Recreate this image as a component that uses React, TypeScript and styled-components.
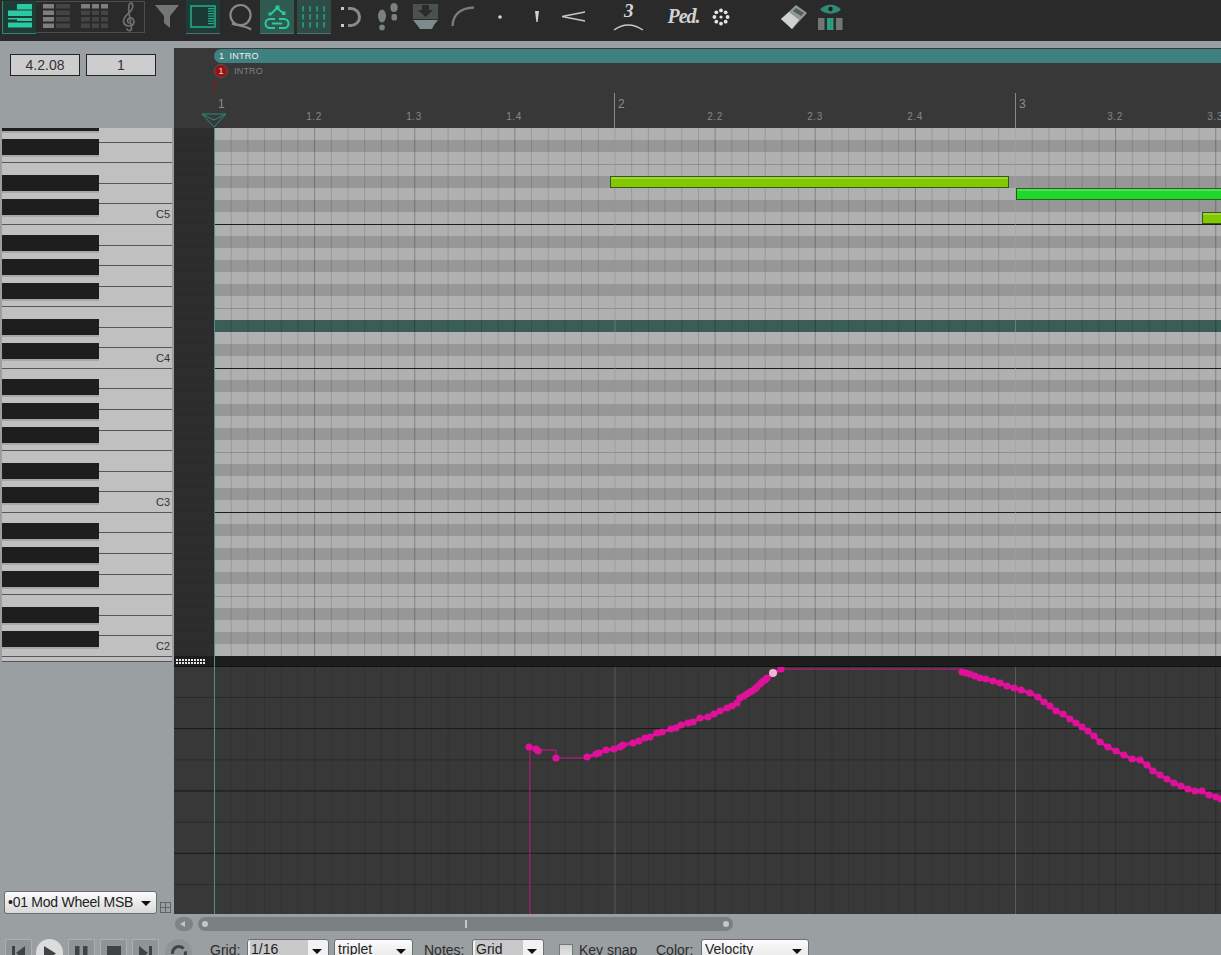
import React from "react";
import styled, { createGlobalStyle } from "styled-components";

const Global = createGlobalStyle`
  html, body { margin: 0; padding: 0; background: #9a9fa2; }
  body { font-family: "Liberation Sans", Arial, sans-serif; overflow: hidden; }
`;

const Page = styled.div`
  width: 1221px; height: 955px; overflow: hidden; background: #9a9fa2;
  display: flex; flex-direction: column;
`;

/* ---------- toolbar ---------- */
const Toolbar = styled.div`
  height: 41px; flex: none; background: #2a2a2a; display: flex; align-items: flex-start;
`;
const ModeGroup = styled.div`
  margin: 1px 0 0 2px; width: 143px; height: 32px; border: 1px solid #4a4d4c; box-sizing: border-box;
  display: flex; align-items: flex-start; position: relative;
`;
const ModeActive = styled.div`
  width: 34px; height: 33px; margin: -1px 0 0 -1px; background: #1f3b36; border-bottom: 1px solid #2b8a76;
  border-left: 1px solid #2b8a76; box-sizing: border-box;
  display: flex; align-items: center; justify-content: center;
`;
const ModeSlot = styled.div<{ $l: number; $w: number }>`
  margin-left: ${(p) => p.$l}px; width: ${(p) => p.$w}px; height: 30px;
  display: flex; align-items: center; justify-content: center;
`;
const Tool = styled.div<{ $l: number; $w: number; $on?: string }>`
  margin-left: ${(p) => p.$l}px; width: ${(p) => p.$w}px; height: 34px; flex: none; box-sizing: border-box;
  display: flex; align-items: center; justify-content: center; position: relative;
  background: ${(p) => p.$on || "transparent"};
  border-bottom: 1px solid ${(p) => (p.$on ? "#4f6f68" : "transparent")};
`;
const ThreeMark = styled.span`
  position: absolute; top: 0; left: 11px; font: italic bold 19px "Liberation Serif", serif; color: #d6d6d6;
`;
const SlurBox = styled.div`
  margin-top: 20px; display: flex;
`;
const PedMark = styled.span`
  font: italic bold 20px "Liberation Serif", serif; color: #d2d2d2; letter-spacing: -1px; white-space: nowrap;
`;

/* ---------- main ---------- */
const Main = styled.div`
  display: flex; height: 873px; flex: none;
`;
const LeftCol = styled.div`
  width: 174px; flex: none; display: flex; flex-direction: column;
`;
const Counters = styled.div`
  display: flex; gap: 6px; margin: 13px 0 0 10px;
`;
const Counter = styled.div`
  width: 70px; height: 22px; box-sizing: border-box; border: 1px solid #222; background: #cdcdcd;
  color: #333; font-size: 14px; line-height: 20px; text-align: center;
`;
const Keyboard = styled.div`
  margin: 52px 0 0 2px; width: 170px; height: 534px; background: #c0c0c0; position: relative; overflow: hidden;
  display: flex; flex-direction: column;
`;
const WhiteKey = styled.div<{ $h: number; $full: boolean }>`
  height: ${(p) => p.$h}px; flex: none; position: relative;
  &::after {
    content: ""; position: absolute; right: 0; bottom: -1px; height: 1px; background: #565656;
    left: ${(p) => (p.$full ? 0 : 97)}px;
  }
`;
const KeyLabel = styled.span`
  position: absolute; right: 2px; bottom: 4px; font-size: 11px; line-height: 12px; color: #333;
`;
const BlackKey = styled.div<{ $top: number }>`
  position: absolute; left: 0; top: ${(p) => p.$top}px; width: 97px; height: 16px; background: #1e1e1e;
  box-shadow: 0 2px 0 #a7a7a7;
`;
const LaneControls = styled.div`
  margin-top: auto; display: flex; align-items: flex-end; padding-left: 4px; margin-bottom: 0;
`;
const LaneSelect = styled.div`
  width: 153px; height: 23px; box-sizing: border-box; border: 1px solid #6a6e70; border-radius: 3px;
  background: linear-gradient(#fbfbfb, #d9d9d9); color: #222; font-size: 14px; line-height: 21px; padding-left: 3px;
  letter-spacing: -0.25px; position: relative; white-space: nowrap;
`;
const Arrow = styled.i<{ $r: number }>`
  position: absolute; right: ${(p) => p.$r}px; top: 9px; width: 0; height: 0;
  border-left: 5px solid transparent; border-right: 5px solid transparent; border-top: 5px solid #111;
`;
const PlusBox = styled.div`
  width: 11px; height: 11px; margin: 0 0 1px 3px; border: 1px solid #5f6466; box-sizing: border-box;
  background:
    linear-gradient(#5f6466, #5f6466) center / 100% 1px no-repeat,
    linear-gradient(#5f6466, #5f6466) center / 1px 100% no-repeat;
`;

const RightCol = styled.div`
  flex: 1; min-width: 0; margin-top: 7px; position: relative; display: flex; flex-direction: column;
`;
const Ruler = styled.div`
  height: 80px; flex: none; background: #383838; position: relative; overflow: hidden;
`;
const RegionBar = styled.div`
  position: absolute; left: 40px; right: 0; top: 1px; height: 14px; background: #3f8080;
  border-radius: 7px 0 0 7px; color: #f0f0f0; font-size: 9px; line-height: 15px; padding-left: 5px; letter-spacing: .2px;
  white-space: pre;
`;
const MarkerBadge = styled.div`
  position: absolute; left: 40px; top: 16px; width: 14px; height: 14px; border-radius: 50%; background: #9c1010;
  border: 1px solid #555; box-sizing: border-box; color: #ddd; font-size: 9px; line-height: 12px; text-align: center;
`;
const MarkerName = styled.span`
  position: absolute; left: 60px; top: 16px; color: #808080; font-size: 9px; line-height: 14px; letter-spacing: .2px;
`;
const RedTick = styled.div`
  position: absolute; left: 40px; top: 30px; width: 1px; height: 15px; background: #8c1616;
`;
const BarTick = styled.div<{ $x: number }>`
  position: absolute; left: ${(p) => p.$x}px; top: 45px; bottom: 0; width: 1px; background: #8a8a8a;
`;
const BarNumber = styled.span<{ $x: number }>`
  position: absolute; left: ${(p) => p.$x}px; top: 49px; font-size: 12px; line-height: 14px; color: #8c8c8c;
`;
const BeatNumber = styled.span<{ $x: number }>`
  position: absolute; left: ${(p) => p.$x - 15}px; width: 30px; text-align: center; top: 63px;
  font-size: 10px; line-height: 12px; color: #868686; letter-spacing: .5px;
`;
const PlayHead = styled.svg`
  position: absolute; left: 27px; top: 65px;
`;

const Roll = styled.div`
  height: 528px; flex: none; display: flex;
`;
const Gutter = styled.div`
  width: 40px; flex: none; background: #2d2d2d;
  background-image: repeating-linear-gradient(#2d2d2d 0 11px, #2a2a2a 11px 12px);
`;
const NoteGrid = styled.div`
  flex: 1; position: relative; overflow: hidden; display: flex; flex-direction: column;
`;
const Lane = styled.div<{ $kind: "light" | "dark" | "mark"; $line?: string }>`
  height: 12px; flex: none; box-sizing: border-box;
  background: ${(p) => (p.$kind === "light" ? "#b0b0b0" : p.$kind === "dark" ? "#979797" : "#3a5d56")};
  border-top: 1px solid ${(p) => p.$line || "transparent"};
`;
const GridLines = styled.div`
  position: absolute; inset: 0;
  background-image:
    linear-gradient(90deg, rgba(255,255,255,.3) 1px, transparent 1px),
    linear-gradient(90deg, rgba(0,0,0,.14) 1px, transparent 1px),
    linear-gradient(90deg, rgba(0,0,0,.14) 1px, transparent 1px);
  background-size: 400.5px 100%, 100.125px 100%, 16.6875px 100%;
`;
const Note = styled.div<{ $x: number; $y: number; $w: number; $c: string }>`
  position: absolute; left: ${(p) => p.$x}px; top: ${(p) => p.$y}px; width: ${(p) => p.$w}px; height: 12px;
  box-sizing: border-box; background: ${(p) => p.$c}; border: 1px solid #2f5a1a;
  box-shadow: inset 0 2px 0 rgba(255,255,255,.22);
`;
const Splitter = styled.div`
  height: 11px; flex: none; background: #1d1d1d; position: relative; border-bottom: 1px solid #111; box-sizing: border-box;
`;
const Grip = styled.div`
  position: absolute; left: 2px; top: 3px; width: 30px; height: 5px;
  background: repeating-linear-gradient(90deg, #e8e8e8 0 2px, transparent 2px 3px);
  mask-image: repeating-linear-gradient(#000 0 2px, transparent 2px 3px);
`;
const CCLane = styled.div`
  flex: 1; position: relative; overflow: hidden; background-color: #383838;
  background-image:
    linear-gradient(rgba(0,0,0,.42) 1px, transparent 1px),
    linear-gradient(rgba(0,0,0,.25) 1px, transparent 1px);
  background-size: 100% 62.4px, 100% 31.2px;
  background-position: 0 61px, 0 30px;
`;
const CCLines = styled.div`
  position: absolute; left: 40px; right: 0; top: 0; bottom: 0;
  background-image:
    linear-gradient(90deg, rgba(255,255,255,.22) 1px, transparent 1px),
    linear-gradient(90deg, rgba(0,0,0,.1) 1px, transparent 1px),
    linear-gradient(90deg, rgba(0,0,0,.12) 1px, transparent 1px);
  background-size: 400.5px 100%, 100.125px 100%, 16.6875px 100%;
`;
const CurveSvg = styled.svg`
  position: absolute; left: 0; top: 0;
`;
const Cursor = styled.div`
  position: absolute; left: 40px; top: 80px; bottom: 0; width: 1px; background: #459683;
`;

/* ---------- scrollbar ---------- */
const ScrollRow = styled.div`
  height: 24px; box-sizing: border-box; flex: none; display: flex; align-items: flex-start; padding: 3px 0 0 175px; gap: 5px;
`;
const ScrollArrow = styled.div`
  width: 18px; height: 14px; border-radius: 7px; background: #7e8385; position: relative;
  &::after {
    content: ""; position: absolute; left: 5px; top: 4px; width: 0; height: 0;
    border-top: 3px solid transparent; border-bottom: 3px solid transparent; border-right: 5px solid #c0c4c5;
  }
`;
const ScrollTrack = styled.div`
  width: 535px; height: 14px; border-radius: 7px; background: #7a7f80; position: relative;
`;
const ScrollDot = styled.i<{ $x: number }>`
  position: absolute; left: ${(p) => p.$x}px; top: 4px; width: 6px; height: 6px; border-radius: 50%; background: #c4c7c8;
`;
const ScrollMid = styled.i`
  position: absolute; left: 267px; top: 3px; width: 2px; height: 8px; background: #c4c7c8;
`;

/* ---------- bottom controls ---------- */
const Controls = styled.div`
  height: 17px; overflow: hidden; flex: none; display: flex; align-items: flex-start; padding-top: 1px; color: #2a2a2a; font-size: 14px;
`;
const Transport = styled.div<{ $round?: boolean; $l: number; $light?: boolean }>`
  margin-left: ${(p) => p.$l}px; width: 27px; height: 28px; box-sizing: border-box; flex: none;
  border: 1px solid ${(p) => (p.$round ? "transparent" : "#abb0b2")};
  border-radius: ${(p) => (p.$round ? "50%" : "1px")};
  background: ${(p) => (p.$light ? "#dcdcdc" : "#8f9496")};
  display: flex; align-items: center; justify-content: center;
`;
const Label = styled.span<{ $l: number; $w: number }>`
  margin-left: ${(p) => p.$l}px; width: ${(p) => p.$w}px; line-height: 18px; padding-top: 2px; white-space: nowrap; flex: none; color: #2c2c2c;
`;
const DropDown = styled.div<{ $w: number; $l: number; $flat?: boolean }>`
  margin-left: ${(p) => p.$l}px; width: ${(p) => p.$w}px; height: 30px; box-sizing: border-box; flex: none; position: relative;
  border: 1px solid #6c7072; border-radius: 3px; padding-left: 2px; line-height: 19px;
  background: ${(p) => (p.$flat ? "#f2f2f2" : "linear-gradient(#fbfbfb, #dedede)")}; color: #222;
`;
const DropText = styled.span<{ $w?: number }>`
  display: inline-block; padding-left: 1px; height: 20px; width: ${(p) => (p.$w ? `${p.$w}px` : "auto")};
  background: ${(p) => (p.$w ? "#c9c9c9" : "transparent")};
`;
const DropArrow = styled.i`
  position: absolute; right: 6px; top: 9px; width: 0; height: 0;
  border-left: 5px solid transparent; border-right: 5px solid transparent; border-top: 5px solid #111;
`;
const Check = styled.div`
  margin: 5px 0 0 15px; width: 14px; height: 20px; flex: none; box-sizing: border-box; border: 1px solid #74787a;
  background: linear-gradient(#cfcfcf, #f2f2f2);
`;

/* ---------- data ---------- */
const TEAL = "#2cc8a2";
const darkOffsets = [0, 24, 60, 84, 120];
const isDark = (y: number) => darkOffsets.includes(((y - 116) % 144 + 144) % 144);
const rows = Array.from({ length: 44 }, (_, i) => 128 + i * 12);
const blackTops = Array.from({ length: 46 }, (_, i) => 116 + i * 12).filter(isDark);

const step = 144 / 7;
const whiteLines: { y: number; full: boolean; label?: string }[] = [];
for (let i = 0; 656 - i * step > 128; i++) {
  const y = 656 - i * step;
  const labels: Record<number, string> = { 0: "C2", 7: "C3", 14: "C4", 21: "C5" };
  whiteLines.unshift({ y, full: i % 7 === 0 || i % 7 === 3, label: labels[i] });
}
const whiteKeys = [
  ...whiteLines.map((l, i) => ({ ...l, h: l.y - (i === 0 ? 128 : whiteLines[i - 1].y) })),
  { y: 661, full: true, label: undefined as string | undefined, h: 5 },
];

const barNums = [
  { x: 44, t: "1" },
  { x: 444, t: "2" },
  { x: 845, t: "3" },
];
const beats = [
  [140, "1.2"], [240, "1.3"], [340, "1.4"], [541, "2.2"], [641, "2.3"], [741, "2.4"], [941, "3.2"], [1041, "3.3"],
] as [number, string][];

const pts: [number, number][] = [
  [529, 747], [536, 749], [538, 751], [556, 758], [587, 757], [596, 754], [599, 753], [606, 750], [614, 749], [620, 747],
  [623, 745], [633, 743], [639, 741], [645, 738], [650, 737], [657, 733], [662, 732], [671, 729], [676, 728], [681, 725],
  [688, 723], [693, 722], [700, 718], [708, 717], [714, 714], [720, 711], [727, 708], [732, 706], [737, 703], [740, 698],
  [744, 696], [747, 694], [750, 692], [752, 691], [755, 689], [757, 687], [760, 684], [762, 682], [765, 680], [767, 678], [781, 669],
];
const ptsRight: [number, number][] = [
  [962, 672], [966, 673], [970, 674], [975, 676], [980, 678], [986, 679], [993, 681], [1000, 683], [1007, 686], [1014, 688], [1021, 690], [1030, 693],
  [1038, 697], [1044, 702], [1050, 706], [1056, 711], [1063, 714], [1070, 719], [1076, 723], [1082, 727], [1088, 731], [1094, 736],
  [1100, 742], [1108, 747], [1116, 751], [1124, 755], [1132, 759], [1140, 760], [1147, 765], [1153, 771], [1160, 775], [1167, 779],
  [1174, 783], [1181, 786], [1188, 789], [1195, 791], [1202, 791], [1209, 795], [1216, 797], [1221, 799],
];
const line = (p: [number, number][]) => p.map(([x, y]) => `${x},${y}`).join(" ");

/* ---------- icons ---------- */
const KeysIcon = () => (
  <svg width="24" height="26" viewBox="0 0 24 26">
    <g fill={TEAL}>
      <rect x="9" y="0" width="15" height="5.5" />
      <rect x="0" y="6.5" width="24" height="5.5" />
      <rect x="9" y="14" width="15" height="3" />
      <rect x="0" y="14" width="24" height="1.5" />
      <rect x="0" y="18.5" width="24" height="5" />
    </g>
  </svg>
);
const ListIcon = () => (
  <svg width="28" height="26" viewBox="0 0 28 26">
    {[0, 6.5, 13, 19.5].map((y) => (
      <g key={y}>
        <rect x="0" y={y} width="11" height="4.5" fill="#7e7e7e" />
        <rect x="13" y={y} width="14" height="4.5" fill="#444" />
      </g>
    ))}
  </svg>
);
const GridIcon = () => (
  <svg width="28" height="26" viewBox="0 0 28 26">
    {[0, 6.5, 13, 19.5].map((y, r) =>
      [[0, 9], [11, 7], [20, 7]].map(([x, w]) => (
        <rect key={`${y}-${x}`} x={x} y={y} width={w} height="4.5" fill={r === 0 ? "#7e7e7e" : "#444"} />
      ))
    )}
  </svg>
);
const ClefIcon = () => (
  <svg width="15" height="30" viewBox="0 0 15 30" fill="none" stroke="#6f6f6f" strokeWidth="1.7">
    <path d="M8 1 C11 0 11.5 5 9.5 8 C7 11.5 1.5 14 1.5 19 C1.5 24 7 25 10.5 23 C13.5 20.5 11.5 15.5 8 16 C5 16.5 4.5 20.5 7.5 21.5" />
    <path d="M8 1 C6 4 6.5 9 7.5 14 L9.5 26 C10 29.5 5 29.5 5 26.5" />
  </svg>
);
const Funnel = () => (
  <svg width="24" height="23" viewBox="0 0 24 23"><polygon points="0,0 24,0 15,11 15,23 9,18 9,11" fill="#737676" /></svg>
);
const PanelIcon = () => (
  <svg width="26" height="23" viewBox="0 0 26 23">
    <rect x="1" y="1" width="24" height="21" fill="#1c3a34" stroke="#22a98a" strokeWidth="1.6" />
    {[3, 5.5, 8, 10.5, 13, 15.5, 18].map((y) => (
      <rect key={y} x="18" y={y} width="6" height="1.2" fill="#22a98a" />
    ))}
  </svg>
);
const QIcon = () => (
  <svg width="26" height="28" viewBox="0 0 26 28" fill="none" stroke="#8a8a8a" strokeWidth="2.2">
    <circle cx="13" cy="12" r="10.5" />
    <path d="M4 21 C10 23 18 23 24 27" />
  </svg>
);
const LinkIcon = () => (
  <svg width="26" height="26" viewBox="0 0 26 26" fill="none" stroke={TEAL} strokeWidth="2">
    <path d="M7 10 L13 4 L19 9" />
    <rect x="4.5" y="8.5" width="3" height="3" fill={TEAL} strokeWidth="0" />
    <rect x="11.5" y="1.5" width="4" height="4" fill={TEAL} strokeWidth="0" />
    <rect x="18" y="7.5" width="3.5" height="3.5" fill={TEAL} strokeWidth="0" />
    <path d="M11 15 H6 a4 4 0 0 0 0 9 H11 M15 15 H20 a4 4 0 0 1 0 9 H15 M8 19.5 H18" />
  </svg>
);
const DashGrid = () => (
  <svg width="24" height="22" viewBox="0 0 24 22" fill="#23a98a">
    {[1, 8, 15, 22].map((x) =>
      [0, 8, 16].map((y) => <rect key={`${x}-${y}`} x={x - 0.6} y={y} width="1.4" height="5.5" />)
    )}
  </svg>
);
const Magnet = () => (
  <svg width="22" height="22" viewBox="0 0 22 22" fill="none">
    <path d="M8 2.5 H11 A8 8 0 0 1 11 19.5 H8" stroke="#8a8a8a" strokeWidth="3" />
    <rect x="1" y="1" width="3" height="3" fill="#c8c8c8" />
    <rect x="1" y="18" width="3" height="3" fill="#c8c8c8" />
  </svg>
);
const Feet = () => (
  <svg width="23" height="28" viewBox="0 0 23 28" fill="#778280">
    <ellipse cx="5" cy="13" rx="4" ry="6.5" /><ellipse cx="5" cy="24.5" rx="2.8" ry="3" />
    <ellipse cx="17" cy="4.5" rx="3.6" ry="4.5" /><rect x="14.5" y="11" width="5.5" height="6.5" rx="2" />
  </svg>
);
const Insert = () => (
  <svg width="26" height="25" viewBox="0 0 26 25">
    <rect x="0" y="0" width="25" height="15" fill="#4b5150" />
    <path d="M9 1 H16 V6 H20 L12.5 13 L5 6 H9 Z" fill="#2a2a2a" />
    <polygon points="0,16 25,16 21,21 19,25 7,25 4,21" fill="#7c8b8b" />
  </svg>
);
const Curve = () => (
  <svg width="24" height="21" viewBox="0 0 24 21" fill="none"><path d="M1.5 20 C2 10 8 2 23 1.5" stroke="#7a7a7a" strokeWidth="2.4" /></svg>
);
const Dot = () => <svg width="6" height="6"><circle cx="3" cy="3" r="1.8" fill="#d8d8d8" /></svg>;
const Accent = () => <svg width="6" height="12"><polygon points="1,0 5,0 3.6,11 2.4,11" fill="#d0d0d0" /></svg>;
const Hairpin = () => (
  <svg width="24" height="11" viewBox="0 0 24 11" fill="none" stroke="#c8c8c8" strokeWidth="1.3">
    <path d="M0 5.5 L23 1 M0 5.5 L23 10" />
  </svg>
);
const Slur = () => (
  <svg width="31" height="10" viewBox="0 0 31 10" fill="none"><path d="M1 8 Q15 -2 30 8" stroke="#c8c8c8" strokeWidth="1.5" /></svg>
);
const Flower = () => (
  <svg width="18" height="18" viewBox="0 0 18 18" fill="#e4e4e4">
    <circle cx="9" cy="9" r="1.6" />
    {[0, 45, 90, 135, 180, 225, 270, 315].map((a) => (
      <circle key={a} cx={9 + 6.6 * Math.cos((a * Math.PI) / 180)} cy={9 + 6.6 * Math.sin((a * Math.PI) / 180)} r="1.9" />
    ))}
  </svg>
);
const Eraser = () => (
  <svg width="28" height="26" viewBox="0 0 28 26">
    <polygon points="1,15 16,1 27,9 12,25" fill="#8f9a98" />
    <polygon points="1,15 9,8 19,16 12,25" fill="#cfd2d1" />
    <polygon points="16,4 24,9 21,12 13,7" fill="#565c5b" />
  </svg>
);
const EyeBars = () => (
  <svg width="25" height="26" viewBox="0 0 25 26">
    <path d="M2 5.5 C7 -1 18 -1 23 5.5 C18 11 7 11 2 5.5 Z" fill="#2f8a76" />
    <circle cx="12.5" cy="5" r="2.2" fill="#1e1e1e" />
    <rect x="0" y="14" width="6.5" height="12" fill="#6f7674" />
    <rect x="9" y="14" width="6.5" height="12" fill="#2f9a82" />
    <rect x="18" y="14" width="6.5" height="12" fill="#6f7674" />
  </svg>
);

const Dark = "#3f4344";
const TStart = () => (
  <svg width="15" height="14"><rect x="1" y="0" width="3" height="14" fill={Dark} /><polygon points="14,0 14,14 5,7" fill={Dark} /></svg>
);
const TPlay = () => <svg width="14" height="15"><polygon points="1,0 13,7.5 1,15" fill={Dark} /></svg>;
const TPause = () => (
  <svg width="13" height="14"><rect x="0" y="0" width="4.5" height="14" fill={Dark} /><rect x="8" y="0" width="4.5" height="14" fill={Dark} /></svg>
);
const TStop = () => <svg width="14" height="14"><rect width="14" height="14" fill={Dark} /></svg>;
const TEnd = () => (
  <svg width="15" height="14"><polygon points="1,0 10,7 1,14" fill={Dark} /><rect x="11" y="0" width="3" height="14" fill={Dark} /></svg>
);
const TLoop = () => (
  <svg width="18" height="18" viewBox="0 0 18 18" fill="none"><circle cx="9" cy="9" r="6.5" stroke={Dark} strokeWidth="3" strokeDasharray="16 3" /></svg>
);

export default function App() {
  return (
    <Page>
      <Global />
      <Toolbar>
        <ModeGroup>
          <ModeActive><KeysIcon /></ModeActive>
          <ModeSlot $l={6} $w={29}><ListIcon /></ModeSlot>
          <ModeSlot $l={9} $w={29}><GridIcon /></ModeSlot>
          <ModeSlot $l={12} $w={16}><ClefIcon /></ModeSlot>
        </ModeGroup>
        <Tool $l={10} $w={24}><Funnel /></Tool>
        <Tool $l={7} $w={34} $on="#1f3b36"><PanelIcon /></Tool>
        <Tool $l={8} $w={25}><QIcon /></Tool>
        <Tool $l={7} $w={34} $on="#2e5a50"><LinkIcon /></Tool>
        <Tool $l={3} $w={34} $on="#2e4c46"><DashGrid /></Tool>
        <Tool $l={9} $w={22}><Magnet /></Tool>
        <Tool $l={15} $w={23}><Feet /></Tool>
        <Tool $l={13} $w={26}><Insert /></Tool>
        <Tool $l={12} $w={24}><Curve /></Tool>
        <Tool $l={22} $w={6}><Dot /></Tool>
        <Tool $l={31} $w={6}><Accent /></Tool>
        <Tool $l={22} $w={24}><Hairpin /></Tool>
        <Tool $l={27} $w={31}>
          <ThreeMark>3</ThreeMark>
          <SlurBox><Slur /></SlurBox>
        </Tool>
        <Tool $l={24} $w={31}><PedMark>Ped.</PedMark></Tool>
        <Tool $l={13} $w={18}><Flower /></Tool>
        <Tool $l={50} $w={28}><Eraser /></Tool>
        <Tool $l={10} $w={25}><EyeBars /></Tool>
      </Toolbar>

      <Main>
        <LeftCol>
          <Counters>
            <Counter>4.2.08</Counter>
            <Counter>1</Counter>
          </Counters>
          <Keyboard>
            {whiteKeys.map((k) => (
              <WhiteKey key={k.y} $h={k.h} $full={k.full}>
                {k.label && <KeyLabel>{k.label}</KeyLabel>}
              </WhiteKey>
            ))}
            {blackTops.map((y) => (
              <BlackKey key={y} $top={y - 129} />
            ))}
          </Keyboard>
          <LaneControls>
            <LaneSelect>
              •01 Mod Wheel MSB
              <Arrow $r={5} />
            </LaneSelect>
            <PlusBox />
          </LaneControls>
        </LeftCol>

        <RightCol>
          <Ruler>
            <RegionBar>{"1  INTRO"}</RegionBar>
            <MarkerBadge>1</MarkerBadge>
            <MarkerName>INTRO</MarkerName>
            <RedTick />
            <BarTick $x={440} />
            <BarTick $x={841} />
            {barNums.map((b) => (
              <BarNumber key={b.t} $x={b.x}>{b.t}</BarNumber>
            ))}
            {beats.map(([x, t]) => (
              <BeatNumber key={t} $x={x}>{t}</BeatNumber>
            ))}
            <PlayHead width="26" height="15" viewBox="0 0 26 15" fill="none">
              <path d="M1 1 H25 L13 14 Z M1 1 L13 7 L25 1" stroke="#2f8a76" strokeWidth="1" />
            </PlayHead>
          </Ruler>
          <Roll>
            <Gutter />
            <NoteGrid>
              {rows.map((y) => (
                <Lane
                  key={y}
                  $kind={y === 320 ? "mark" : isDark(y) ? "dark" : "light"}
                  $line={(y - 224) % 144 === 0 ? "#1c1c1c" : (y - 164) % 144 === 0 ? "#8f8f8f" : undefined}
                />
              ))}
              <GridLines />
              <Note $x={396} $y={48} $w={399} $c="#84c800" />
              <Note $x={802} $y={60} $w={300} $c="#1ed82e" />
              <Note $x={988} $y={84} $w={120} $c="#84c800" />
            </NoteGrid>
          </Roll>
          <Splitter><Grip /></Splitter>
          <CCLane>
            <CCLines />
            <CurveSvg width="1047" height="247" viewBox="174 667 1047 247" fill="none">
              <path d="M530 914 V747 H533 V750 H556 V758 H587" stroke="#cf1490" strokeWidth="1" />
              <polyline points={line(pts.slice(4))} stroke="#e0109a" strokeWidth="3" />
              <path d="M781 669 H962" stroke="#cf1490" strokeWidth="1" />
              <polyline points={line(ptsRight)} stroke="#e0109a" strokeWidth="3" />
              {[...pts, ...ptsRight].map(([x, y]) => (
                <circle key={`${x}-${y}`} cx={x} cy={y} r="3.6" fill="#e0109a" />
              ))}
              <circle cx="773" cy="673" r="4" fill="#efb4d8" />
            </CurveSvg>
          </CCLane>
          <Cursor />
        </RightCol>
      </Main>

      <ScrollRow>
        <ScrollArrow />
        <ScrollTrack>
          <ScrollDot $x={4} />
          <ScrollMid />
          <ScrollDot $x={525} />
        </ScrollTrack>
      </ScrollRow>

      <Controls>
        <Transport $l={5}><TStart /></Transport>
        <Transport $l={4} $round $light><TPlay /></Transport>
        <Transport $l={5}><TPause /></Transport>
        <Transport $l={5}><TStop /></Transport>
        <Transport $l={5}><TEnd /></Transport>
        <Transport $l={6} $round><TLoop /></Transport>
        <Label $l={18} $w={30}>Grid:</Label>
        <DropDown $l={7} $w={82} $flat><DropText $w={57}>1/16</DropText><DropArrow /></DropDown>
        <DropDown $l={5} $w={79}><DropText>triplet</DropText><DropArrow /></DropDown>
        <Label $l={11} $w={42}>Notes:</Label>
        <DropDown $l={6} $w={72} $flat><DropText $w={47}>Grid</DropText><DropArrow /></DropDown>
        <Check />
        <Label $l={6} $w={56}>Key snap</Label>
        <Label $l={21} $w={37}>Color:</Label>
        <DropDown $l={8} $w={108}><DropText>Velocity</DropText><DropArrow /></DropDown>
      </Controls>
    </Page>
  );
}
